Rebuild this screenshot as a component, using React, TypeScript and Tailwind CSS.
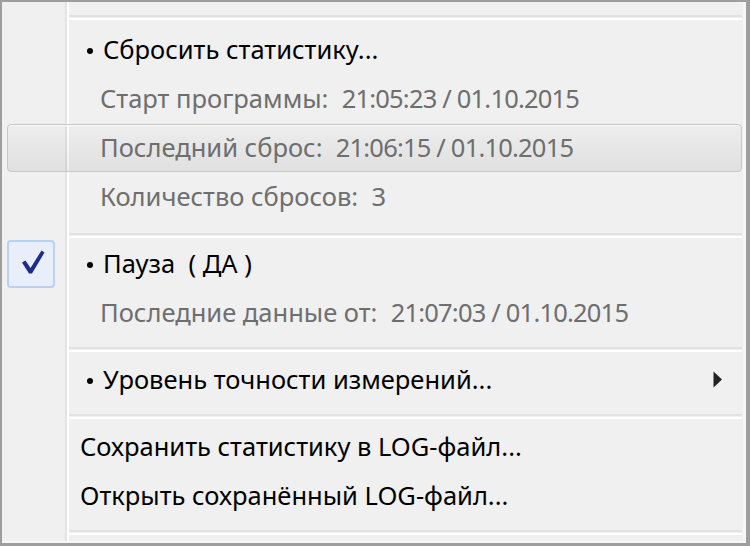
import React from "react";

function Sep({ mt, mb }: { mt: string; mb: string }) {
  return (
    <div className={`${mt} ${mb} ml-[67px] mr-[1px] flex flex-col`}>
      <div className="h-[2px] bg-[#e2e2e2]" />
      <div className="h-px" />
      <div className="h-[2px] bg-white" />
    </div>
  );
}

function Check() {
  return (
    <div className="-m-px flex h-[48px] w-[48px] shrink-0 items-center justify-center rounded-[4px] border-2 border-[#b9d2f3] bg-[#e8eefa]">
      <svg width="48" height="48" viewBox="0 0 48 48" className="-m-[2px]">
        <polygon points="15,22.5 18.5,20.5 23.5,28 34.5,10.5 37.5,12.5 25,33.5 22,33.5" fill="#1c2c8c" />
      </svg>
    </div>
  );
}

function Row({
  children,
  highlight,
  checked,
  arrow,
}: {
  children: React.ReactNode;
  highlight?: boolean;
  checked?: boolean;
  arrow?: boolean;
}) {
  return (
    <div className="flex h-[49px] shrink-0 pl-[5px] pr-[1px]">
      <div
        className={
          "flex h-[48px] w-full items-center rounded-[4px] border " +
          (highlight
            ? "border-[#c6c6c6] bg-[linear-gradient(to_bottom,rgba(0,0,0,0.01),rgba(0,0,0,0.065))] shadow-[inset_0_1px_0_rgba(255,255,255,0.7)]"
            : "border-transparent")
        }
      >
        <div className="flex h-[46px] w-[46px] shrink-0 items-center justify-center">
          {checked ? <Check /> : null}
        </div>
        <div className="flex-1 whitespace-pre">{children}</div>
        {arrow ? (
          <svg width="10" height="18" viewBox="0 0 10 18" className="mr-[18px]">
            <polygon points="0.5,0.5 0.5,16.5 9,8.5" fill="#222222" />
          </svg>
        ) : null}
      </div>
    </div>
  );
}

function Bullet({ children }: { children: React.ReactNode }) {
  return (
    <div className="flex items-center pl-[33px] text-black">
      <span className="mr-[10px] mt-[2px] h-[6px] w-[6px] rounded-full bg-black" />
      <span>{children}</span>
    </div>
  );
}

function D({ children }: { children: React.ReactNode }) {
  return <span className="tracking-[-0.8px]">{children}</span>;
}

function Gray({ children }: { children: React.ReactNode }) {
  return <div className="pl-[46px] text-[#6e6e6e]">{children}</div>;
}

function Plain({ children }: { children: React.ReactNode }) {
  return <div className="pl-[26px] text-black">{children}</div>;
}

export default function App() {
  return (
    <div className="h-[546px] w-[750px] border-b-[3px] border-l-2 border-r-4 border-t-2 border-[#9e9e9e] bg-[#f7f7f7] font-['Noto_Sans',sans-serif] text-[25.5px] leading-none">
      <div className="flex h-[539px] w-[741px] flex-col bg-[#f0f0f0] bg-[linear-gradient(to_right,transparent_63px,#e3e3e3_63px,#e3e3e3_65px,#ffffff_65px,#ffffff_67px,transparent_67px)]">
        <Sep mt="mt-[13px]" mb="mb-[6px]" />
        <Row>
          <Bullet>Сбросить статистику...</Bullet>
        </Row>
        <Row>
          <Gray>
            Старт программы:  <D>21:05:23 / 01.10.2015</D>
          </Gray>
        </Row>
        <Row highlight>
          <Gray>
            Последний сброс:  <D>21:06:15 / 01.10.2015</D>
          </Gray>
        </Row>
        <Row>
          <Gray>Количество сбросов:  3</Gray>
        </Row>
        <Sep mt="mt-[11px]" mb="mb-[2px]" />
        <Row checked>
          <Bullet>Пауза  ( ДА )</Bullet>
        </Row>
        <Row>
          <Gray>
            Последние данные от:  <D>21:07:03 / 01.10.2015</D>
          </Gray>
        </Row>
        <Sep mt="mt-[9px]" mb="mb-[4px]" />
        <Row arrow>
          <Bullet>Уровень точности измерений...</Bullet>
        </Row>
        <Sep mt="mt-[9px]" mb="mb-[4px]" />
        <Row>
          <Plain>Сохранить статистику в LOG-файл...</Plain>
        </Row>
        <Row>
          <Plain>Открыть сохранённый LOG-файл...</Plain>
        </Row>
        <Sep mt="mt-[9px]" mb="mb-[4px]" />
      </div>
    </div>
  );
}
